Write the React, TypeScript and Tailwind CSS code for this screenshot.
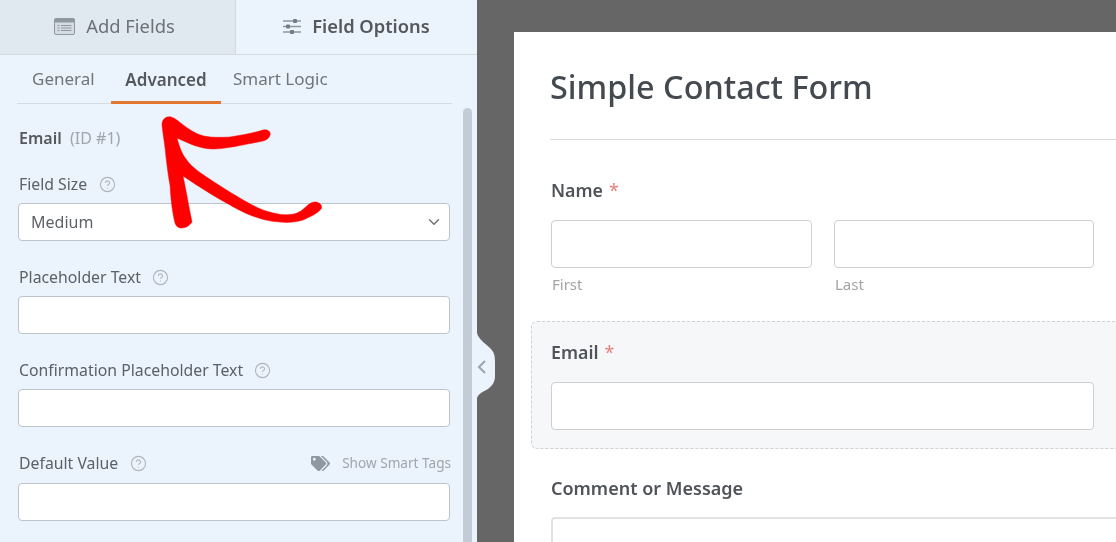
import { CircleHelp, ChevronDown } from "lucide-react";
import { FaTags } from "react-icons/fa";

function Help() {
  return <CircleHelp size={17} strokeWidth={1.6} className="text-[#b0b5ba] shrink-0" />;
}

function PanelLabel({ text, gap }: { text: string; gap: string }) {
  return (
    <div className={`flex items-center h-5 ${gap} text-[15.8px] leading-5 text-[#5c6167] mb-[9px]`}>
      <span>{text}</span>
      <Help />
    </div>
  );
}

function PanelInput() {
  return <div className="h-[38px] bg-white border border-[#bcc3cb] rounded-[4px]" />;
}

function FormInput({ className }: { className: string }) {
  return <div className={`h-[48px] bg-white border border-[#cfcfcf] rounded-[4px] ${className}`} />;
}

function Required() {
  return <span className="text-[#e8817a] font-normal ml-[6px]">*</span>;
}

export default function App() {
  return (
    <div className="w-[1116px] h-[542px] overflow-hidden flex relative blur-[0.35px] font-['Noto_Sans','Open_Sans',sans-serif] bg-[#666666]">
      {/* Left panel */}
      <div className="w-[477px] h-full bg-[#ebf3fc] shrink-0 flex flex-col relative">
        <div className="h-[55px] flex border-b border-[#d3dae1] shrink-0">
          <div className="w-[236px] bg-[#e0e8f0] border-r border-[#d3dae1] flex items-center justify-center gap-[11px] pr-[6px] pb-[2px] text-[18.4px] text-[#6b7278]">
            <svg width="21" height="17" viewBox="0 0 21 17" aria-hidden="true">
              <rect x="0.5" y="0.5" width="20" height="16" rx="1.5" fill="#d5dce3" stroke="#8f979f" />
              <rect x="0.5" y="0.5" width="20" height="4" rx="1" fill="#8f979f" />
              <path d="M3.5 7.5h2M3.5 10h2M3.5 12.5h2M7 7.5h10.5M7 10h10.5M7 12.5h10.5" stroke="#8f979f" strokeWidth="1.2" />
            </svg>
            <span>Add Fields</span>
          </div>
          <div className="flex-1 flex items-center justify-center gap-[11px] pb-[2px] text-[18.3px] font-semibold text-[#55595e]">
            <svg width="18" height="17" viewBox="0 0 18 17" aria-hidden="true">
              <path d="M0 3h18M0 8.5h18M0 14h18" stroke="#8f969d" strokeWidth="1.4" />
              <rect x="10" y="1" width="4" height="4" rx="1" fill="#747b82" />
              <rect x="3" y="6.5" width="4" height="4" rx="1" fill="#747b82" />
              <rect x="7" y="12" width="4" height="4" rx="1" fill="#747b82" />
            </svg>
            <span>Field Options</span>
          </div>
        </div>

        <div className="flex h-[49px] mx-[17px] w-[435px] border-b border-[#d5dbe2] text-[17px] text-[#6f757b] shrink-0">
          <div className="w-[94px] pl-[15px] flex items-center">General</div>
          <div className="w-[110px] flex items-center justify-center font-semibold text-[#55595e] border-b-[3px] border-[#e27730] -mb-px pt-[3px]">Advanced</div>
          <div className="pl-[12px] flex items-center">Smart Logic</div>
        </div>

        <div className="flex-1 flex min-h-0">
          <div className="w-[463px] pl-[18px] pr-[13px] pt-[24px] shrink-0">
            <div className="h-5 ml-px text-[16px] leading-5 text-[#a0a6ac] mb-[26px]">
              <span className="font-semibold text-[#55595e]">Email</span>&nbsp;&nbsp;(ID #1)
            </div>
            <div className="mb-[26px]">
              <div className="ml-px"><PanelLabel text="Field Size" gap="gap-[12px]" /></div>
              <div className="h-[38px] bg-white border border-[#bcc3cb] rounded-[4px] flex items-center justify-between pl-[12px] pr-[6px] text-[16px] text-[#5f6368]">
                <span>Medium</span>
                <ChevronDown size={18} strokeWidth={2} className="text-[#6f757b]" />
              </div>
            </div>
            <div className="mb-[26px]">
              <div className="ml-px"><PanelLabel text="Placeholder Text" gap="gap-[11px]" /></div>
              <PanelInput />
            </div>
            <div className="mb-[26px]">
              <div className="ml-px"><PanelLabel text="Confirmation Placeholder Text" gap="gap-[11px]" /></div>
              <PanelInput />
            </div>
            <div>
              <div className="flex justify-between pl-px mb-px">
                <PanelLabel text="Default Value" gap="gap-[12px]" />
                <div className="flex items-center h-5 gap-[12px] -mr-px text-[13.6px] text-[#a0a6ac]">
                  <FaTags size={19} className="text-[#8f97a0]" />
                  <span>Show Smart Tags</span>
                </div>
              </div>
              <PanelInput />
            </div>
          </div>
          <div className="w-[9px] mt-[4px] bg-[#c3ccd6] rounded-t-[5px] shrink-0" />
        </div>

        {/* Collapse handle */}
        <svg className="absolute left-[477px] top-[330px]" width="19" height="70" viewBox="0 0 19 70" aria-hidden="true">
          <path d="M0 3 C2 10 8 13 13 18 C17 22 18 25 18 32 V46 C18 52 15 56 11 59 C6 62 2 63 0 68 Z" fill="#ebf3fc" />
        </svg>
        <svg className="absolute left-[477px] top-[359px]" width="10" height="16" viewBox="0 0 10 16" aria-hidden="true">
          <path d="M8 2 L2 8 L8 14" fill="none" stroke="#9ba4ad" strokeWidth="2" />
        </svg>
      </div>

      {/* Canvas */}
      <div className="flex-1 pl-[37px] pt-[32px] min-w-0">
        <div className="w-[800px] h-[600px] bg-white pl-[36px] pt-[34px]">
          <h1 className="text-[32.4px] leading-10 font-medium text-[#444a50] pb-[33px] border-b border-[#dcdcdc]">Simple Contact Form</h1>

          <div className="mt-[40px] h-5 ml-px text-[17.8px] leading-5 font-semibold text-[#505459]">
            Name<Required />
          </div>
          <div className="flex gap-[22px] mt-[20px] ml-px">
            <div className="w-[261px]">
              <FormInput className="w-full" />
              <div className="mt-[7px] ml-px text-[15px] leading-[18px] text-[#a4a4a4]">First</div>
            </div>
            <div className="w-[260px]">
              <FormInput className="w-full" />
              <div className="mt-[7px] ml-px text-[15px] leading-[18px] text-[#a4a4a4]">Last</div>
            </div>
          </div>

          <div className="mt-[28px] -ml-[19px] h-[128px] bg-[#f6f7f9] border border-dashed border-[#cfd1d5] rounded-[6px] pl-[19px] pt-[20px]">
            <div className="h-5 text-[17.8px] leading-5 font-semibold text-[#505459]">
              Email<Required />
            </div>
            <FormInput className="w-[543px] mt-[20px]" />
          </div>

          <div className="mt-[29px] ml-px h-5 text-[18px] leading-5 font-semibold text-[#505459]">Comment or Message</div>
          <div className="mt-[19px] ml-px h-[120px] bg-white border-2 border-[#e2e2e2] rounded-[4px]" />
        </div>
      </div>

      {/* Red annotation arrow */}
      <svg className="absolute left-[130px] top-[100px] pointer-events-none" width="200" height="135" viewBox="0 0 200 135" aria-hidden="true">
        <path
          fill="#ff0000"
          stroke="#ff0000"
          strokeWidth="0.5"
          strokeLinejoin="round"
          d="M32 25 C32 19 36 16 41 17 C46 18 52 25 62 31 C72 37 80 38 100 37 C112 35 124 33 133 30 C138 29 141 32 140 35 C139 39 135 41 128 42 C112 45 95 49 83 49 C70 49 58 43 47 38 C49 46 52 54 56 59 C62 68 72 74 84 82 C100 92 118 104 133 110 C145 114 160 118 171 111 C176 107 180 102 185 102 C190 102 193 106 191 109 C188 113 180 117 173 120 C166 122 158 123 150 122 C130 121 112 112 100 105 C85 97 68 86 53 76 C56 90 59 108 62 122 C60 125 56 128 52 128 C48 128 46 126 45 123 C42 110 41 100 40 85 C38 75 37 65 36 57 C35 45 33 35 32 25 Z"
        />
      </svg>
    </div>
  );
}
